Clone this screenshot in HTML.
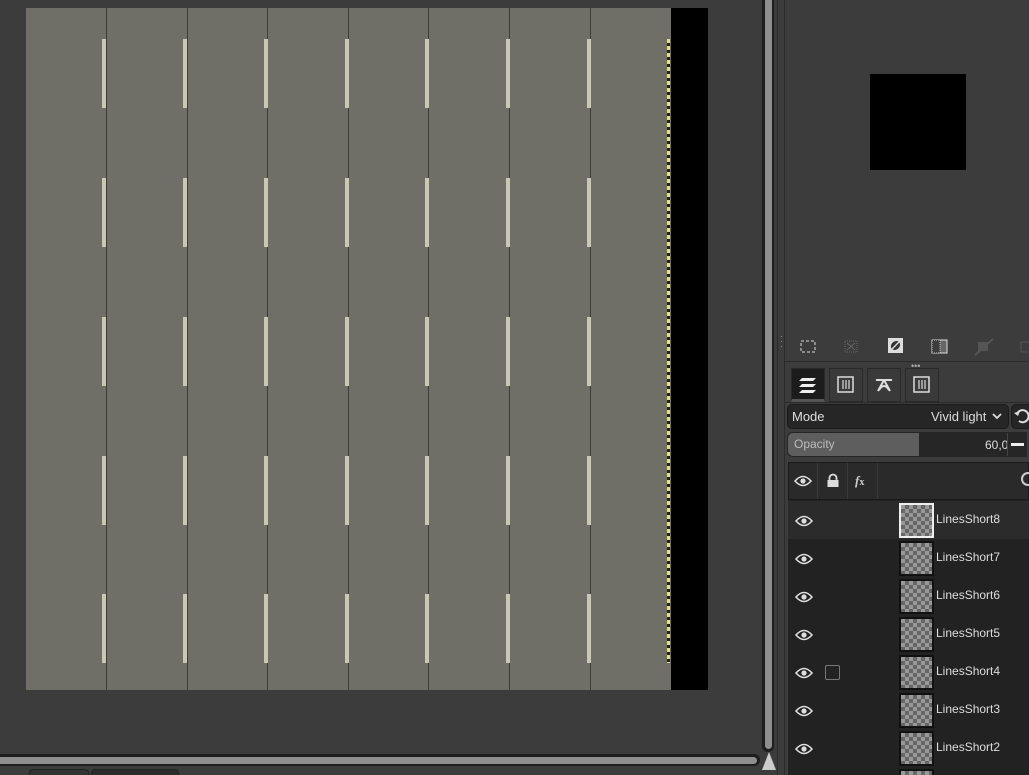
<!DOCTYPE html>
<html style="overflow:hidden;width:1029px;height:775px"><head><meta charset="utf-8"><style>
*{margin:0;padding:0;box-sizing:border-box}
body{width:1029px;height:775px;overflow:hidden;background:#3c3c3c;position:relative;font-family:"Liberation Sans",sans-serif;}
.a{position:absolute}
.road{left:26px;top:8px;width:645px;height:682px;background:#6f6f67;}
.ln{position:absolute;top:0;width:1px;height:682px;background:#3d3d38}
.d{position:absolute;width:4px;height:69px;background:#c8c8b4}
.row{position:absolute;left:0;width:241px;height:38px;overflow:hidden}
.th{position:absolute;left:111px;top:2px;width:35px;height:35px;border:2px solid #111;
background-color:#999;background-image:linear-gradient(45deg,#666 25%,transparent 25%,transparent 75%,#666 75%),linear-gradient(45deg,#666 25%,transparent 25%,transparent 75%,#666 75%);background-size:8px 8px;background-position:0 0,4px 4px}
.nm{position:absolute;left:148px;top:11px;font-size:12px;color:#ddd}
.eye{position:absolute;left:7px;top:13px}
.tab{position:absolute;top:368px;width:34px;height:34px;border:1px solid #2a2a2a;background:#3a3a3a}
</style></head><body>
<div class="a road">
<div class="ln" style="left:80px"></div><div class="ln" style="left:161px"></div><div class="ln" style="left:241px"></div><div class="ln" style="left:322px"></div><div class="ln" style="left:402px"></div><div class="ln" style="left:483px"></div><div class="ln" style="left:564px"></div>
</div>
<div id="dashes"></div>
<div class="a" style="left:671px;top:8px;width:37px;height:682px;background:#000"></div>
<div class="a" style="left:667px;top:39px;width:3px;height:624px;background:repeating-linear-gradient(#e2e27a 0 4px,#222 4px 7px)"></div>
<div class="a" style="left:762px;top:0;width:12px;height:752px;background:#1e1e1e;border-radius:0 0 6px 6px"></div>
<div class="a" style="left:765px;top:0;width:7px;height:749px;background:#8e8e8e;border-radius:0 0 4px 4px"></div>
<div class="a" style="left:0;top:754px;width:760px;height:12px;background:#1e1e1e;border-radius:0 6px 6px 0"></div>
<div class="a" style="left:0;top:757px;width:757px;height:7px;background:#8e8e8e;border-radius:0 4px 4px 0"></div>
<div class="a" style="left:762px;top:752px;width:0;height:0;border-left:7px solid transparent;border-right:7px solid transparent;border-bottom:18px solid #ccc"></div>
<div class="a" style="left:29px;top:769px;width:60px;height:10px;background:#333;border:1px solid #222;border-radius:4px"></div>
<div class="a" style="left:91px;top:769px;width:88px;height:10px;background:#2c2c2c;border:1px solid #222;border-radius:4px"></div>
<div class="a" style="left:777px;top:0;width:1px;height:775px;background:#2a2a2a"></div>
<div class="a" style="left:784px;top:0;width:1px;height:775px;background:#2a2a2a"></div>
<div class="a" style="left:870px;top:74px;width:96px;height:96px;background:#000"></div>
<div class="a" style="left:780px;top:334px;color:#aaa;font-size:8px;line-height:5px">·<br>·<br>·</div>
<svg class="a" style="left:785px;top:330px" width="244" height="32">
<rect x="16" y="11" width="14" height="11" fill="none" stroke="#ddd" stroke-dasharray="3 2"/>
<rect x="60" y="11" width="12" height="11" fill="none" stroke="#666" stroke-dasharray="1 1"/><path d="M62 13l8 7M70 13l-8 7" stroke="#666"/>
<rect x="103" y="8" width="15" height="15" fill="#ddd"/><ellipse cx="110.5" cy="15.5" rx="5" ry="4" fill="#333" transform="rotate(-40 110.5 15.5)"/><path d="M104 22l13-13" stroke="#ddd" stroke-width="1.5"/>
<rect x="147" y="10" width="15" height="13" fill="#666" stroke="#ddd"/><rect x="147" y="10" width="8" height="13" fill="#3c3c3c" stroke="#ccc" stroke-dasharray="1 1"/>
<rect x="193" y="12" width="10" height="9" fill="#555"/><path d="M190 25l18-16" stroke="#555" stroke-width="2"/>
<rect x="236" y="12" width="10" height="10" fill="none" stroke="#555"/>
</svg>
<div class="a" style="left:785px;top:361px;width:244px;height:1px;background:#2a2a2a"></div>
<div class="a" style="left:911px;top:361px;color:#aaa;font-size:9px">•••</div>
<div class="tab" style="left:791px;background:#1c1c1c;border-bottom:3px solid #555"></div>
<svg class="a" style="left:797px;top:375px" width="22" height="20"><path d="M5 3h14l-3 3H2zM5 9h14l-3 3H2zM5 15h14l-3 3H2z" fill="#eee"/></svg>
<div class="tab" style="left:829px"></div>
<svg class="a" style="left:836px;top:375px" width="20" height="20"><rect x="2" y="2" width="15" height="15" fill="none" stroke="#ddd" stroke-width="1.5"/><path d="M7 5v9M10 5v9M13 5v9" stroke="#bbb" stroke-width="1.5"/></svg>
<div class="tab" style="left:867px"></div>
<svg class="a" style="left:873px;top:375px" width="22" height="20"><path d="M3 5h16M11 5l-6 11M11 5l6 11M6 15q5-8 10 0" stroke="#ddd" stroke-width="2" fill="none"/></svg>
<div class="tab" style="left:905px"></div>
<svg class="a" style="left:912px;top:375px" width="20" height="20"><rect x="2" y="2" width="15" height="15" fill="none" stroke="#ddd" stroke-width="1.5"/><path d="M7 5v9M10 5v9M13 5v9" stroke="#bbb" stroke-width="1.5"/></svg>
<div class="a" style="left:785px;top:402px;width:244px;height:1px;background:#2a2a2a"></div>
<div class="a" style="left:787px;top:404px;width:222px;height:25px;background:#262626;border:1px solid #1a1a1a;border-radius:5px"></div>
<div class="a" style="left:792px;top:409px;font-size:13px;color:#ddd">Mode</div>
<div class="a" style="left:931px;top:409px;font-size:13px;color:#ddd">Vivid light</div>
<svg class="a" style="left:991px;top:412px" width="12" height="10"><path d="M2 2l4 4 4-4" stroke="#ddd" stroke-width="1.8" fill="none"/></svg>
<div class="a" style="left:1011px;top:404px;width:25px;height:25px;background:#262626;border:1px solid #1a1a1a;border-radius:5px"></div>
<svg class="a" style="left:1013px;top:407px" width="16" height="18"><path d="M4 7a6 6 0 1 1 2 7" stroke="#ddd" stroke-width="2" fill="none"/><path d="M1 6l4 3 2-5z" fill="#ddd"/></svg>
<div class="a" style="left:787px;top:432px;width:240px;height:25px;background:#262626;border-radius:5px 0 0 5px"></div>
<div class="a" style="left:788px;top:433px;width:131px;height:23px;background:#5e5e5e;border-radius:5px 0 0 5px"></div>
<div class="a" style="left:794px;top:437px;font-size:12px;color:#bbb">Opacity</div>
<div class="a" style="left:985px;top:438px;font-size:12px;color:#ddd">60,0</div>
<div class="a" style="left:1007px;top:433px;width:1px;height:23px;background:#444"></div>
<div class="a" style="left:1011px;top:443px;width:13px;height:3px;background:#eee"></div>
<div class="a" style="left:788px;top:462px;width:241px;height:313px;background:#222"></div>
<div class="a" style="left:788px;top:462px;width:241px;height:38px;background:#2a2a2a;border:1px solid #1a1a1a"></div>
<div class="a" style="left:817px;top:463px;width:1px;height:36px;background:#3a3a3a"></div>
<div class="a" style="left:847px;top:463px;width:1px;height:36px;background:#3a3a3a"></div>
<div class="a" style="left:877px;top:463px;width:1px;height:36px;background:#3a3a3a"></div>
<svg class="a" style="left:794px;top:474px" width="18" height="14"><path d="M1 7q8-9 16 0q-8 9-16 0z" fill="none" stroke="#ddd" stroke-width="1.6"/><circle cx="9" cy="7" r="2.6" fill="#ddd"/></svg>
<svg class="a" style="left:826px;top:473px" width="14" height="16"><path d="M3.5 7V5a3.5 3.5 0 0 1 7 0v2" stroke="#ddd" stroke-width="1.8" fill="none"/><rect x="1.5" y="7" width="11" height="7" fill="#ddd"/></svg>
<div class="a" style="left:855px;top:473px;font-size:13px;color:#ccc;font-style:italic;font-family:'Liberation Serif',serif;font-weight:bold">f<span style="font-size:10px;font-style:normal">x</span></div>
<div class="a" style="left:1021px;top:472px;width:14px;height:14px;border:2px solid #ccc;border-radius:50%"></div>
<div class="a" style="left:788px;top:0;width:241px;height:775px;overflow:hidden"><div id="rows"></div></div>
<script>
var h='';
var xs=[102,183,264,345,425,506,587],ys=[39,178,317,456,594];
xs.forEach(function(x){ys.forEach(function(y){h+='<div class="d" style="left:'+x+'px;top:'+y+'px"></div>'})});
document.getElementById('dashes').outerHTML=h;
var r='',names=['LinesShort8','LinesShort7','LinesShort6','LinesShort5','LinesShort4','LinesShort3','LinesShort2',''];
names.forEach(function(n,i){var t=501+i*38;
r+='<div class="row" style="top:'+t+'px;'+(i==0?'background:#2b2b2b':'')+'">'+
(n?'<svg class="eye" width="18" height="14"><path d="M1 7q8-9 16 0q-8 9-16 0z" fill="none" stroke="#ddd" stroke-width="1.6"/><circle cx="9" cy="7" r="2.6" fill="#ddd"/></svg>':'')+
(i==4?'<div style="position:absolute;left:37px;top:12px;width:15px;height:15px;border:1px solid #777;border-radius:2px"></div>':'')+
'<div class="th" style="'+(i==0?'border-color:#eee;':'')+'"></div>'+(n?'<div class="nm">'+n+'</div>':'')+'</div>';});
document.getElementById('rows').outerHTML=r;
</script>
</body></html>
